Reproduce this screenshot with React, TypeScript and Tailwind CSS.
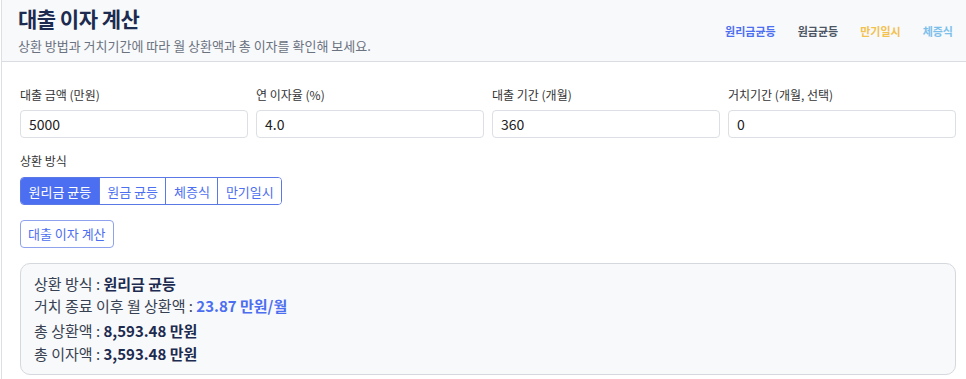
import React, { useState } from 'react';

const FONT = "font-['Noto_Sans_CJK_KR','Noto_Sans',sans-serif]";

type Method = '원리금 균등' | '원금 균등' | '체증식' | '만기일시';

const methods: Method[] = ['원리금 균등', '원금 균등', '체증식', '만기일시'];

const fields = [
  { label: '대출 금액 (만원)', value: '5000' },
  { label: '연 이자율 (%)', value: '4.0' },
  { label: '대출 기간 (개월)', value: '360' },
  { label: '거치기간 (개월, 선택)', value: '0' },
];

const App: React.FC = () => {
  const [method, setMethod] = useState<Method>('원리금 균등');

  return (
    <div className={`${FONT} w-[966px] h-[379px] overflow-hidden bg-white`}>
      <div className="border-l border-[#dcdfe4] ml-px h-full">

        {/* Header */}
        <div className="flex items-end justify-between bg-[#f8f9fb] border-b border-[#d9dce1] h-[62px] pl-4 pr-[13px]">
          <div className="pt-[3px] self-start">
            <h1 className="text-[21px] font-bold text-[#1c2b4f] leading-[31px] tracking-tight">대출 이자 계산</h1>
            <p className="text-[13px] text-[#6b7280] leading-[20px] mt-[2px]">상환 방법과 거치기간에 따라 월 상환액과 총 이자를 확인해 보세요.</p>
          </div>
          <nav className="flex items-center gap-[22px] text-[11px] font-bold self-center mt-[1px]">
            <span className="text-[#4c6ef0]">원리금균등</span>
            <span className="text-[#4b5563]">원금균등</span>
            <span className="text-[#f2c14e]">만기일시</span>
            <span className="text-[#7cc0ea]">체증식</span>
          </nav>
        </div>

        {/* Body */}
        <div className="pl-[18px] pr-[10px] pt-[24px]">
          <div className="grid grid-cols-4 gap-2">
            {fields.map(f => (
              <label key={f.label} className="flex flex-col">
                <span className="text-[12px] text-[#333] leading-[18px]">{f.label}</span>
                <input
                  defaultValue={f.value}
                  className="mt-[6px] h-[28px] px-2 text-[14px] text-[#222] border border-[#dcdfe3] rounded-[4px] bg-white focus:outline-none"
                />
              </label>
            ))}
          </div>

          <div className="mt-[14px] text-[12px] text-[#333] leading-[18px]">상환 방식</div>
          <div className="mt-[7px] inline-flex border border-[#5b79e6] rounded-[4px] overflow-hidden">
            {methods.map((m, i) => (
              <button
                key={m}
                onClick={() => setMethod(m)}
                className={`h-[26px] px-[7.5px] text-[13px] leading-none ${i > 0 ? 'border-l border-[#5b79e6]' : ''} ${method === m ? 'bg-[#4c6ef0] text-white' : 'bg-white text-[#4c6ef0]'}`}
              >
                {m}
              </button>
            ))}
          </div>

          <div className="mt-[15px]">
            <button className="h-[28px] px-[7px] text-[13px] text-[#4c6ef0] border border-[#8ea2ee] rounded-[4px] bg-white">대출 이자 계산</button>
          </div>

          <div className="mt-[15px] bg-[#f8f9fb] border border-[#d5d8dd] rounded-[10px] pl-[13px] pt-[9px] pb-[9px] text-[15px] text-[#374151]">
            <div className="leading-[22px]">상환 방식 : <b className="text-[#1c2b4f]">{method}</b></div>
            <div className="leading-[22px]">거치 종료 이후 월 상환액 : <b className="text-[#4c6ef0]">23.87 만원/월</b></div>
            <div className="leading-[23px] mt-[2px]">총 상환액 : <b className="text-[#1c2b4f]">8,593.48 만원</b></div>
            <div className="leading-[23px]">총 이자액 : <b className="text-[#1c2b4f]">3,593.48 만원</b></div>
          </div>
        </div>
      </div>
    </div>
  );
};

export default App;
